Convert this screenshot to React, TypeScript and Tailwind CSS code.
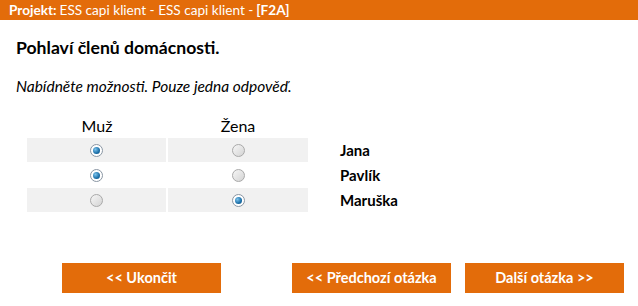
const rows = [
  { name: "Jana", value: "m" },
  { name: "Pavlík", value: "m" },
  { name: "Maruška", value: "f" },
];

function Radio({ checked }: { checked: boolean }) {
  if (checked) {
    return (
      <span className="inline-flex size-[13px] items-center justify-center rounded-full border border-[#8a96a3] bg-white">
        <span className="size-[7px] rounded-full bg-[radial-gradient(circle_at_35%_35%,#7cc3ec,#1b6fa8_60%,#0b4a78)]" />
      </span>
    );
  }
  return (
    <span className="inline-block size-[13px] rounded-full border border-[#a9a9a9] bg-[linear-gradient(135deg,#f6f6f6,#d4d4d4)]" />
  );
}

export default function App() {
  return (
    <div
      className="h-[306px] w-[638px] bg-white text-black"
      style={{ fontFamily: "Lato, 'Open Sans', sans-serif" }}
    >
      <div className="flex h-[20px] items-center bg-[#e36c0a] pl-[9px] text-[13.6px] text-white">
        <span className="font-bold">Projekt:</span>
        <span className="ml-[3px]">ESS capi klient - ESS capi klient -</span>
        <span className="ml-[3px] font-bold">[F2A]</span>
      </div>

      <div className="px-[16px]">
        <h1 className="mt-[18px] text-[17.6px] leading-[20px] font-bold">Pohlaví členů domácnosti.</h1>
        <p className="mt-[19px] text-[15.5px] leading-[18px] italic">Nabídněte možnosti. Pouze jedna odpověď.</p>
      </div>

      <div className="mt-[22px] ml-[27px] flex w-[281px] text-[16px] leading-[18px]">
        <div className="w-[140px] text-center">Muž</div>
        <div className="ml-[1px] w-[140px] text-center">Žena</div>
      </div>

      <div className="mt-[3px] ml-[27px] flex flex-col gap-[1px]">
        {rows.map((r, i) => (
          <div key={r.name} className="flex h-[24px] items-center">
            <div className={`flex h-full w-[139px] items-center justify-center ${i % 2 === 0 ? "bg-[#f1f1f1]" : "bg-white"}`}>
              <Radio checked={r.value === "m"} />
            </div>
            <div className={`ml-[2px] flex h-full w-[140px] items-center justify-center ${i % 2 === 0 ? "bg-[#f1f1f1]" : "bg-white"}`}>
              <Radio checked={r.value === "f"} />
            </div>
            <div className="ml-[32px] text-[15px] font-bold">{r.name}</div>
          </div>
        ))}
      </div>

      <div className="mt-[51px] flex pl-[62px] text-[14.5px] font-bold text-white">
        <button className="h-[30px] w-[159px] bg-[#e36c0a]">&lt;&lt; Ukončit</button>
        <button className="ml-[71px] h-[30px] w-[159px] bg-[#e36c0a]">&lt;&lt; Předchozí otázka</button>
        <button className="ml-[14px] h-[30px] w-[159px] bg-[#e36c0a]">Další otázka &gt;&gt;</button>
      </div>
    </div>
  );
}
